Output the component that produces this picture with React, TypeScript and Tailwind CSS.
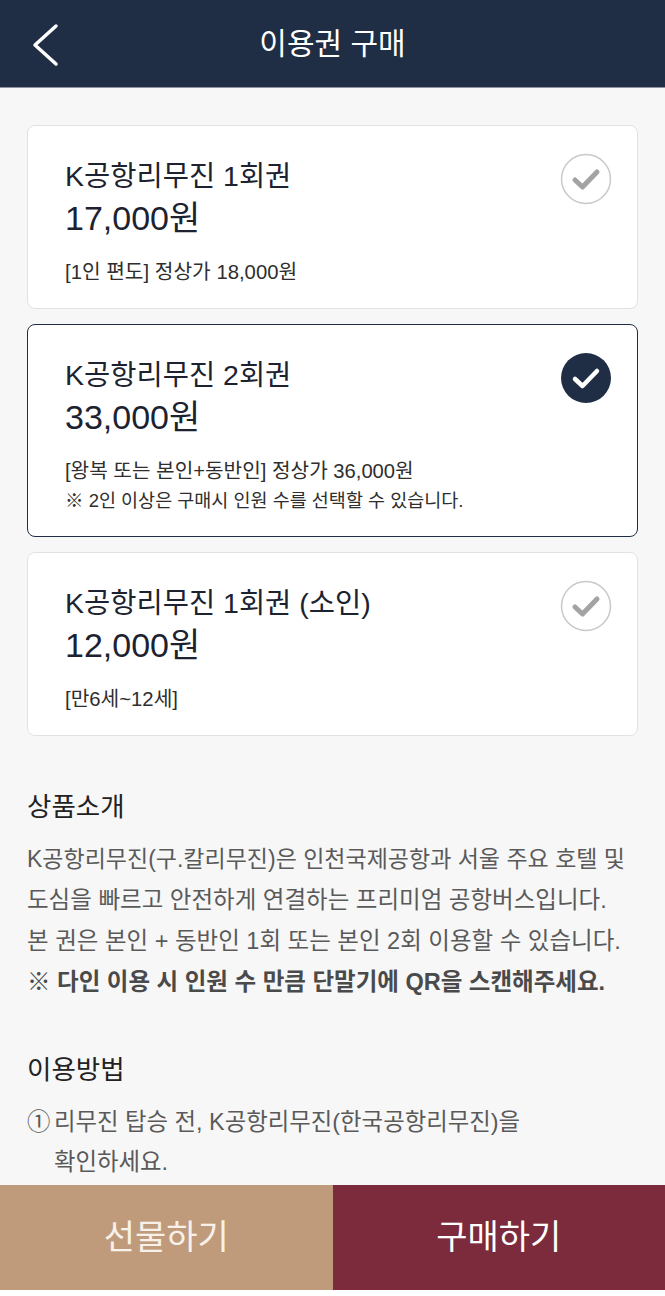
import React from "react";

const FONT = { fontFamily: '"Liberation Sans", "Noto Sans CJK KR", sans-serif' };

function Check({ on }: { on: boolean }) {
  return on ? (
    <svg width="52" height="52" viewBox="0 0 52 52">
      <circle cx="26" cy="26" r="25" fill="#1f2d45" />
      <path d="M15 27 L22.5 34 L37 19" fill="none" stroke="#fff" strokeWidth="4.5" strokeLinecap="round" strokeLinejoin="round" />
    </svg>
  ) : (
    <svg width="52" height="52" viewBox="0 0 52 52">
      <circle cx="26" cy="26" r="24.5" fill="#fff" stroke="#c9c9c9" strokeWidth="1.5" />
      <path d="M15 27 L22.5 34 L37 19" fill="none" stroke="#a3a3a3" strokeWidth="5" strokeLinecap="round" strokeLinejoin="round" />
    </svg>
  );
}

type Line = { text: string; cls: string };

function Card({ title, price, lines, on }: { title: string; price: string; lines: Line[]; on: boolean }) {
  return (
    <div
      className={
        "flex justify-between rounded-[8px] bg-white pl-[37px] pr-[25px] pt-[33px] pb-[21px] " +
        (on ? "border-[1.5px] border-[#1f2d45]" : "border border-[#e2e2e2]")
      }
    >
      <div className="flex flex-col">
        <div className="whitespace-nowrap text-[28.5px] leading-[34px] text-[#1c2230]">{title}</div>
        <div className="mt-[4px] text-[34px] leading-[42px] text-[#1c2230]">{price}</div>
        <div className="mt-[19px] flex flex-col">
          {lines.map((l, i) => (
            <div key={i} className={"whitespace-nowrap leading-[29px] text-[#2e2e2e] " + l.cls}>
              {l.text}
            </div>
          ))}
        </div>
      </div>
      <div className="mt-[-6px]">
        <Check on={on} />
      </div>
    </div>
  );
}

export default function App() {
  return (
    <div className="flex h-[1296px] w-full flex-col overflow-hidden bg-[#f7f7f7]" style={FONT}>
      <header className="relative flex h-[88px] shrink-0 items-center justify-center border-b border-[#8c939e] bg-[#1f2d45]">
        <svg className="absolute left-[30px] top-[23px]" width="32" height="44" viewBox="0 0 32 44">
          <path d="M26 3 L5 22 L26 41" fill="none" stroke="#fff" strokeWidth="3.5" strokeLinecap="round" strokeLinejoin="round" />
        </svg>
        <h1 className="text-[30px] font-normal text-white">이용권 구매</h1>
      </header>

      <main className="flex-1 overflow-hidden px-[27px] pt-[37px]">
        <div className="flex flex-col gap-[15px]">
          <Card
            on={false}
            title="K공항리무진 1회권"
            price="17,000원"
            lines={[{ text: "[1인 편도] 정상가 18,000원", cls: "text-[20.3px]" }]}
          />
          <Card
            on={true}
            title="K공항리무진 2회권"
            price="33,000원"
            lines={[
              { text: "[왕복 또는 본인+동반인] 정상가 36,000원", cls: "text-[20.2px]" },
              { text: "※ 2인 이상은 구매시 인원 수를 선택할 수 있습니다.", cls: "text-[18.5px]" },
            ]}
          />
          <Card
            on={false}
            title="K공항리무진 1회권 (소인)"
            price="12,000원"
            lines={[{ text: "[만6세~12세]", cls: "text-[20.3px]" }]}
          />
        </div>

        <section className="mt-[54px]">
          <h2 className="text-[26.5px] leading-[34px] text-[#222]">상품소개</h2>
          <div className="mt-[15px] whitespace-nowrap text-[23.5px] leading-[41px] text-[#5a5a5a]">
            <p className="text-[23px]">K공항리무진(구.칼리무진)은 인천국제공항과 서울 주요 호텔 및</p>
            <p>도심을 빠르고 안전하게 연결하는 프리미엄 공항버스입니다.</p>
            <p>본 권은 본인 + 동반인 1회 또는 본인 2회 이용할 수 있습니다.</p>
            <p className="font-bold text-[#4a4a4a]">※ 다인 이용 시 인원 수 만큼 단말기에 QR을 스캔해주세요.</p>
          </div>
        </section>

        <section className="mt-[50px]">
          <h2 className="text-[26.5px] leading-[34px] text-[#222]">이용방법</h2>
          <div className="mt-[15px] flex whitespace-nowrap text-[23.4px] leading-[40px] text-[#5a5a5a]">
            <span className="w-[27px] shrink-0">①</span>
            <p>
              리무진 탑승 전, K공항리무진(한국공항리무진)을
              <br />
              확인하세요.
            </p>
          </div>
        </section>
      </main>

      <footer className="flex h-[105px] shrink-0">
        <button className="flex flex-1 items-center justify-center bg-[#bf9b7b] text-[34px] text-[#f8f1ea]">선물하기</button>
        <button className="flex flex-1 items-center justify-center bg-[#7b2b3b] text-[34px] text-white">구매하기</button>
      </footer>
      <div className="h-[6px] shrink-0 bg-white" />
    </div>
  );
}
